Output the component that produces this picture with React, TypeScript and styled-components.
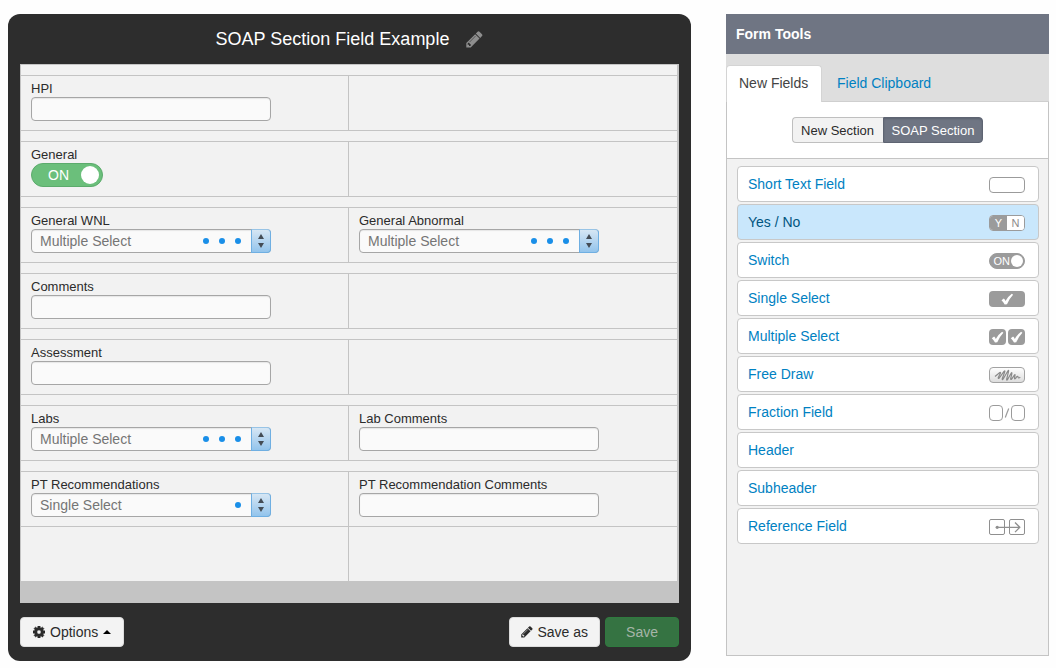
import React, { useId, useState } from 'react';
import styled, { createGlobalStyle, css } from 'styled-components';

const GlobalStyle = createGlobalStyle`
  *, *::before, *::after { box-sizing: border-box; }
  body {
    margin: 0;
    background: #fefefe;
    color: #2b2b2b;
    font-family: "Liberation Sans", Arial, Helvetica, sans-serif;
    font-size: 14px;
    line-height: 20px;
  }
  button, input, select { font-family: inherit; }
`;

const Page = styled.div`
  display: flex;
  gap: 35px;
  padding: 14px 7px 7px 8px;
`;

/* ---------- Form editor ---------- */

const Editor = styled.main`
  flex: 1;
  min-width: 0;
  padding: 0 12px;
  background: #2d2d2d;
  border-radius: 12px;
`;

const TitleBar = styled.header`
  display: flex;
  align-items: center;
  justify-content: center;
  gap: 17px;
  height: 50px;
`;

const Title = styled.h1`
  margin: 0;
  color: #fff;
  font-size: 18px;
  line-height: 24px;
  font-weight: 400;
`;

const IconButton = styled.button`
  display: flex;
  padding: 0;
  border: 0;
  background: none;
  color: #8e8e8e;
  cursor: pointer;
`;

const Sheet = styled.div`
  padding: 0 2px 22px 1px;
  border-top: 1px solid #c4c4c4;
  background: #c4c4c4;
`;

const Row = styled.div<{ $spaced?: boolean }>`
  display: grid;
  grid-template-columns: 1fr 1fr;
  background: #f2f2f2;
  ${({ $spaced }) =>
    $spaced &&
    css`
      &::before {
        content: "";
        grid-column: 1 / -1;
        height: 11px;
        border-bottom: 1px solid #c4c4c4;
      }
      border-bottom: 1px solid #c4c4c4;
    `}
`;

const Cell = styled.div`
  height: 54px;
  padding: 4px 10px 0;
  &:first-child { border-right: 1px solid #c4c4c4; }
`;

const Label = styled.label`
  display: block;
  font-size: 13px;
  line-height: 17px;
`;

const TextBox = styled.input`
  display: block;
  width: 240px;
  max-width: 100%;
  height: 24px;
  padding: 0 8px;
  border: 1px solid #a6a6a6;
  border-radius: 4px;
  background: #fafafa;
  box-shadow: inset 0 1px 1px #e6e6e6;
  font-size: 14px;
`;

const SelectBox = styled.div`
  position: relative;
  width: 240px;
  max-width: 100%;
`;

const Select = styled.select`
  appearance: none;
  display: block;
  width: 100%;
  height: 24px;
  padding: 0 60px 0 8px;
  border: 1px solid #a6a6a6;
  border-radius: 4px;
  background: #fafafa;
  box-shadow: inset 0 1px 1px #e6e6e6;
  color: #757575;
  font-size: 14px;
`;

const SelectEnd = styled.span`
  position: absolute;
  inset: 0 0 0 auto;
  display: flex;
  align-items: center;
  gap: 10px;
  pointer-events: none;
`;

const Dot = styled.i`
  width: 6px;
  height: 6px;
  border-radius: 50%;
  background: #1a8fe8;
`;

const Stepper = styled.span`
  display: flex;
  align-items: center;
  justify-content: center;
  width: 20px;
  height: 24px;
  border: 1px solid #6fafe2;
  border-top-color: #98c4e6;
  border-radius: 0 4px 4px 0;
  background: linear-gradient(#d6e6f4, #93c4ec);
`;

const Toggle = styled.label`
  position: relative;
  display: flex;
  align-items: center;
  justify-content: space-between;
  width: 72px;
  height: 24px;
  padding: 0 3px 0 16px;
  border: 1px solid #5cab6c;
  border-radius: 12px;
  background: #6bbf7b;
  color: #fff;
  cursor: pointer;
  input {
    position: absolute;
    inset: 0;
    margin: 0;
    opacity: 0;
  }
`;

const Knob = styled.i`
  width: 18px;
  height: 18px;
  border-radius: 50%;
  background: #fff;
`;

const Footer = styled.footer`
  display: flex;
  gap: 5px;
  padding: 14px 0;
`;

const Button = styled.button<{ $primary?: boolean; $end?: boolean }>`
  display: flex;
  align-items: center;
  gap: 5px;
  height: 30px;
  padding: 0 12px;
  border: 1px solid #dcdcdc;
  border-radius: 4px;
  background: #f3f3f3;
  color: #2b2b2b;
  font-size: 14px;
  cursor: pointer;
  ${({ $end }) =>
    $end &&
    css`
      gap: 4px;
      margin-left: auto;
      padding: 0 11px;
    `}
  ${({ $primary }) =>
    $primary &&
    css`
      padding: 0 20px;
      border-color: #2f7a3f;
      background: #357342;
      color: #a6b5a8;
    `}
`;

/* ---------- Form tools ---------- */

const Tools = styled.aside`
  display: flex;
  flex-direction: column;
  width: 323px;
  flex: none;
  margin-bottom: 5px;
`;

const ToolsTitle = styled.h2`
  margin: 0;
  padding: 10px;
  background: #6f7583;
  color: #fff;
  font-size: 14px;
  line-height: 20px;
  font-weight: 700;
`;

const Tabs = styled.nav`
  display: flex;
  gap: 2px;
  padding-top: 11px;
  border-bottom: 1px solid #cfcfcf;
  background: #dedede;
`;

const Tab = styled.a<{ $active?: boolean }>`
  min-width: 96px;
  height: 37px;
  margin-bottom: -1px;
  padding: 7px 12px;
  border: 1px solid transparent;
  border-bottom: 0;
  border-radius: 4px 4px 0 0;
  color: #0081c2;
  text-decoration: none;
  ${({ $active }) =>
    $active &&
    css`
      border-color: #d4d4d4;
      background: #fff;
      color: #444;
    `}
`;

const Panel = styled.div`
  flex: 1;
  border: 1px solid #c4c4c4;
  border-top: 0;
  background: #f2f2f2;
`;

const SectionBar = styled.div`
  display: flex;
  justify-content: center;
  padding: 15px 0;
  border-bottom: 1px solid #c4c4c4;
  background: #fff;
`;

const Segment = styled.button<{ $active?: boolean }>`
  min-width: 91px;
  height: 26px;
  padding: 0 8px;
  border: 1px solid #bfbfbf;
  border-right: 0;
  border-radius: 4px 0 0 4px;
  background: #f2f2f2;
  color: #2b2b2b;
  font-size: 13px;
  cursor: pointer;
  ${({ $active }) =>
    $active &&
    css`
      border: 1px solid #5e6472;
      border-radius: 0 4px 4px 0;
      background: #6f7583;
      box-shadow: inset 0 1px 2px #5c6270;
      color: #fff;
    `}
`;

const FieldList = styled.ul`
  display: grid;
  gap: 2px;
  margin: 0;
  padding: 7px 9px 7px 10px;
  list-style: none;
`;

const FieldItem = styled.a<{ $active?: boolean }>`
  display: flex;
  align-items: center;
  justify-content: space-between;
  height: 36px;
  padding: 0 13px 0 10px;
  border: 1px solid #c8c8c8;
  border-radius: 4px;
  background: ${({ $active }) => ($active ? '#c9e7fc' : '#fff')};
  color: ${({ $active }) => ($active ? '#005580' : '#0081c2')};
  text-decoration: none;
`;

const Badge = styled.span<{ $round?: boolean; $filled?: boolean }>`
  display: flex;
  align-items: center;
  justify-content: flex-end;
  width: 36px;
  height: 16px;
  margin-top: 2px;
  overflow: hidden;
  border: 1px solid #9b9b9b;
  border-radius: ${({ $round }) => ($round ? '8px' : '4px')};
  background: ${({ $filled }) => ($filled ? '#9b9b9b' : '#fff')};
  color: #fff;
  font-size: 11px;
  line-height: 14px;
`;

const Half = styled.span<{ $on?: boolean }>`
  flex: 1;
  text-align: center;
  background: ${({ $on }) => ($on ? '#9b9b9b' : '#fff')};
  color: ${({ $on }) => ($on ? '#fff' : '#8c8c8c')};
`;

const SmallKnob = styled.i`
  flex: none;
  width: 12px;
  height: 12px;
  margin: 0 1px;
  border-radius: 50%;
  background: #fff;
`;

const Drawing = styled.svg`
  display: block;
  margin-top: 2px;
`;

/* ---------- Icons ---------- */

const Pencil = ({ size }: { size: number }) => (
  <svg width={size} height={size} viewBox="100 120 1600 1600" fill="currentColor" aria-hidden="true">
    <path d="M491 1536l91-91-235-235-91 91v107h128v128h107zM1014 608q0-22-22-22-10 0-17 7l-542 542q-7 7-7 17 0 22 22 22 10 0 17-7l542-542q7-7 7-17zM960 416l416 416-832 832h-416v-416zM1643 512q0 53-37 90l-166 166-416-416 166-165q36-38 90-38 53 0 91 38l235 234q37 39 37 91z" />
  </svg>
);

const Gear = () => (
  <svg width="12" height="12" viewBox="128 128 1536 1536" fill="currentColor" aria-hidden="true">
    <path
      stroke="currentColor"
      strokeWidth="60"
      d="M1152 896q0-106-75-181t-181-75-181 75-75 181 75 181 181 75 181-75 75-181zm512-109v222q0 12-8 23t-20 13l-185 28q-19 54-39 91 35 50 107 138 10 12 10 25t-9 23q-27 37-99 108t-94 71q-12 0-26-9l-138-108q-44 23-91 38-16 136-29 186-7 28-36 28h-222q-14 0-24.5-8.5t-11.500-21.500l-28-184q-49-16-90-37l-141 107q-10 9-25 9-14 0-25-11-126-114-165-168-7-10-7-23 0-12 8-23 15-21 51-66.500t54-70.500q-27-50-41-99l-183-27q-13-2-21-12.500t-8-23.500v-222q0-12 8-23t19-13l186-28q14-46 39-92-40-57-107-138-10-12-10-24 0-10 9-23 26-36 98.500-107.500t94.500-71.500q13 0 26 10l138 107q44-23 91-38 16-136 29-186 7-28 36-28h222q14 0 24.500 8.500t11.500 21.500l28 184q49 16 90 37l142-107q9-9 24-9 13 0 25 10 129 119 165 170 7 8 7 22 0 12-8 23-15 21-51 66.500t-54 70.500q26 50 41 98l183 28q13 2 21 12.500t8 23.500z"
    />
  </svg>
);

const CaretUp = () => (
  <svg width="8" height="4" viewBox="0 0 8 4" aria-hidden="true">
    <path d="M0 4L4 0l4 4z" fill="#000" />
  </svg>
);

const Arrows = () => (
  <svg width="6" height="14" viewBox="0 0 6 14" fill="#444c55" aria-hidden="true">
    <path d="M0 5L3 0l3 5zM0 9h6l-3 5z" />
  </svg>
);

const tick = 'M-5.500 1.200L-3.200-.500Q-2.100.500-1.500 1.900Q1-2.600 4.800-5.300L6.100-4.300Q2.100-.200 0 5.200L-2.300 5.500Q-3.600 3-5.500 1.200z';

const SingleTick = () => (
  <Drawing width="36" height="16" viewBox="0 0 36 16" aria-hidden="true">
    <rect width="36" height="16" rx="4" fill="#9b9b9b" />
    <path d={tick} transform="translate(18 8)" fill="#fff" />
  </Drawing>
);

const DoubleTick = () => (
  <Drawing width="36" height="16" viewBox="0 0 36 16" aria-hidden="true">
    <rect width="17" height="16" rx="4" fill="#9b9b9b" />
    <rect x="19" width="17" height="16" rx="4" fill="#9b9b9b" />
    <path d={tick} transform="translate(8.300 8)" fill="#fff" />
    <path d={tick} transform="translate(27.300 8)" fill="#fff" />
  </Drawing>
);

const Scribble = () => (
  <Drawing width="36" height="16" viewBox="0 0 36 16" fill="none" aria-hidden="true">
    <defs>
      <linearGradient id="pad" x1="0" y1="0" x2="0" y2="1">
        <stop offset="0" stopColor="#fff" />
        <stop offset="1" stopColor="#dcdcdc" />
      </linearGradient>
    </defs>
    <rect x=".5" y=".5" width="35" height="15" rx="3.500" fill="url(#pad)" stroke="#a2a2a2" />
    <path
      d="M6 9.500L10.800 5.500Q12 5 11.300 6.500L9.300 10.500Q9 12 10.200 11L15 4.500Q16.300 3 15.700 5L13.300 11.500Q13 13.500 14.200 12L18.800 4Q20 2.500 19.500 4.500L17.700 12Q17.500 14 18.700 12.300L22 6.500Q23.200 4.800 22.800 6.800L21.700 11.500Q21.600 13.300 22.800 11.800L25.200 8.300Q26.300 7 26 8.500L25.500 11Q25.500 12.500 26.600 11.300L28 9.500Q29 8.800 29 10Q29.200 11.800 31.300 10.300"
      stroke="#8a8a8a"
      strokeWidth="1.200"
    />
  </Drawing>
);

const Fraction = () => (
  <Drawing width="36" height="16" viewBox="0 0 36 16" fill="none" stroke="#9b9b9b" aria-hidden="true">
    <rect x=".5" y=".5" width="13" height="15" rx="3.500" />
    <rect x="22.500" y=".5" width="13" height="15" rx="3.500" />
    <path d="M16.300 12.500l3.400-9" strokeWidth="1.200" />
  </Drawing>
);

const Reference = () => (
  <Drawing width="36" height="16" viewBox="0 0 36 16" fill="none" stroke="#8f8f8f" aria-hidden="true">
    <rect x=".5" y=".5" width="15" height="15" rx="1.500" />
    <rect x="20.500" y=".5" width="15" height="15" rx="1.500" />
    <path d="M8 8.300h22M26 3.500l4.800 4.800-4.800 4.800" strokeWidth="1.300" />
    <circle cx="8.200" cy="8.300" r="1.600" fill="#8f8f8f" stroke="none" />
  </Drawing>
);

/* ---------- Fields ---------- */

type FieldKind = 'text' | 'switch' | 'single' | 'multiple';
interface FieldSpec {
  label: string;
  kind: FieldKind;
}

const Field = ({ label, kind }: FieldSpec) => {
  const id = useId();
  const [on, setOn] = useState(true);
  const dots = kind === 'multiple' ? [0, 1, 2] : [0];
  return (
    <>
      <Label htmlFor={id}>{label}</Label>
      {kind === 'text' && <TextBox id={id} type="text" />}
      {kind === 'switch' && (
        <Toggle>
          <input id={id} type="checkbox" role="switch" checked={on} onChange={() => setOn(!on)} />
          {on ? 'ON' : 'OFF'}
          <Knob />
        </Toggle>
      )}
      {(kind === 'single' || kind === 'multiple') && (
        <SelectBox>
          <Select id={id}>
            <option>{kind === 'single' ? 'Single Select' : 'Multiple Select'}</option>
          </Select>
          <SelectEnd>
            {dots.map((d) => (
              <Dot key={d} />
            ))}
            <Stepper>
              <Arrows />
            </Stepper>
          </SelectEnd>
        </SelectBox>
      )}
    </>
  );
};

const rows: FieldSpec[][] = [
  [{ label: 'HPI', kind: 'text' }],
  [{ label: 'General', kind: 'switch' }],
  [
    { label: 'General WNL', kind: 'multiple' },
    { label: 'General Abnormal', kind: 'multiple' },
  ],
  [{ label: 'Comments', kind: 'text' }],
  [{ label: 'Assessment', kind: 'text' }],
  [
    { label: 'Labs', kind: 'multiple' },
    { label: 'Lab Comments', kind: 'text' },
  ],
  [
    { label: 'PT Recommendations', kind: 'single' },
    { label: 'PT Recommendation Comments', kind: 'text' },
  ],
];

const tools: { name: string; icon?: React.ReactNode; active?: boolean }[] = [
  { name: 'Short Text Field', icon: <Badge /> },
  {
    name: 'Yes / No',
    active: true,
    icon: (
      <Badge>
        <Half $on>Y</Half>
        <Half>N</Half>
      </Badge>
    ),
  },
  {
    name: 'Switch',
    icon: (
      <Badge $round $filled>
        ON
        <SmallKnob />
      </Badge>
    ),
  },
  { name: 'Single Select', icon: <SingleTick /> },
  { name: 'Multiple Select', icon: <DoubleTick /> },
  { name: 'Free Draw', icon: <Scribble /> },
  { name: 'Fraction Field', icon: <Fraction /> },
  { name: 'Header' },
  { name: 'Subheader' },
  { name: 'Reference Field', icon: <Reference /> },
];

export default function App() {
  return (
    <>
      <GlobalStyle />
      <Page>
        <Editor>
          <TitleBar>
            <Title>SOAP Section Field Example</Title>
            <IconButton type="button" aria-label="Rename form">
              <Pencil size={17} />
            </IconButton>
          </TitleBar>
          <Sheet>
            {rows.map(([left, right]) => (
              <Row key={left.label} $spaced>
                <Cell>
                  <Field {...left} />
                </Cell>
                <Cell>{right && <Field {...right} />}</Cell>
              </Row>
            ))}
            <Row>
              <Cell />
              <Cell />
            </Row>
          </Sheet>
          <Footer>
            <Button type="button">
              <Gear />
              Options
              <CaretUp />
            </Button>
            <Button type="button" $end>
              <Pencil size={12} />
              Save as
            </Button>
            <Button type="button" $primary>
              Save
            </Button>
          </Footer>
        </Editor>
        <Tools>
          <ToolsTitle>Form Tools</ToolsTitle>
          <Tabs>
            <Tab href="#new-fields" $active>
              New Fields
            </Tab>
            <Tab href="#clipboard">Field Clipboard</Tab>
          </Tabs>
          <Panel>
            <SectionBar>
              <Segment type="button">New Section</Segment>
              <Segment type="button" $active>
                SOAP Section
              </Segment>
            </SectionBar>
            <FieldList>
              {tools.map(({ name, icon, active }) => (
                <li key={name}>
                  <FieldItem href="#add" $active={active}>
                    {name}
                    {icon}
                  </FieldItem>
                </li>
              ))}
            </FieldList>
          </Panel>
        </Tools>
      </Page>
    </>
  );
}
